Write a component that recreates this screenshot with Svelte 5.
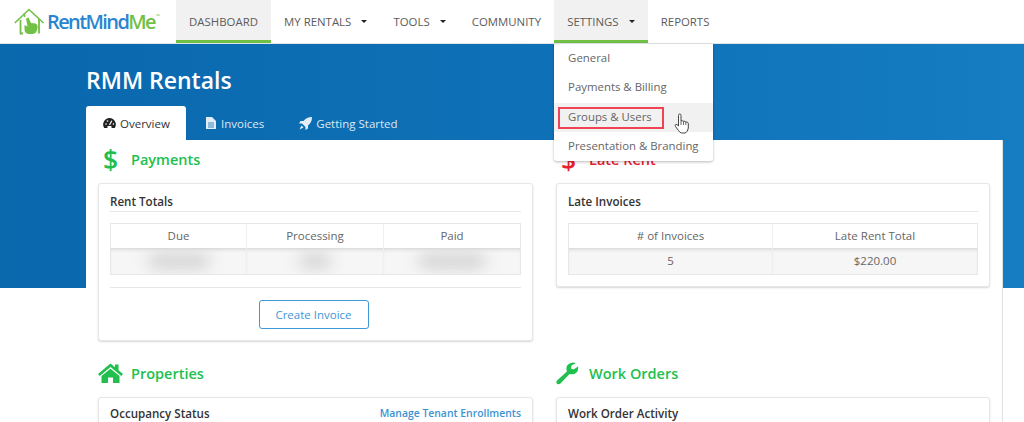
<script>
  const nav = [
    { label: 'Dashboard', active: true },
    { label: 'My Rentals', caret: true },
    { label: 'Tools', caret: true },
    { label: 'Community' },
    { label: 'Settings', caret: true, active: true, menu: true },
    { label: 'Reports' }
  ];
  const menu = ['General', 'Payments & Billing', 'Groups & Users', 'Presentation & Branding'];
</script>

<header class="nav">
  <a class="logo" href="#top">
    <svg width="32" height="27" viewBox="0 0 32 27" fill="none">
      <path d="M0.8 15 L15 1.5 L29.5 15" stroke="#72c045" stroke-width="1.6"/>
      <path d="M6.5 12 V25.5 H9 M25 11 V25.5" stroke="#72c045" stroke-width="1.8"/>
      <path d="M10.5 5 V9" stroke="#72c045" stroke-width="1.5"/>
      <path d="M12 10.5 L14.5 9.5 L17 15 L21.5 15.5 Q24 16.5 23.5 20 Q23 25.5 18.5 26 H14.5 Q10.5 25.5 10.5 21 V17 L13.5 18.5 Z" fill="#72c045"/>
    </svg>
    <span class="wordmark"><b class="blue">RentMind</b><b class="green">Me</b><sup>™</sup></span>
  </a>
  <nav class="items">
    {#each nav as item}
      <div class="item" class:active={item.active}>
        {item.label}
        {#if item.caret}<i class="caret"></i>{/if}
        {#if item.menu}
          <div class="menu">
            {#each menu as m, i}
              <div class="menu-row" class:hover={i === 2}>
                {#if i === 2}<span class="callout">{m}</span>{:else}{m}{/if}
              </div>
            {/each}
            <svg class="hand" width="16" height="21" viewBox="0 0 16 21">
              <path d="M4.5 13 V2.5 Q4.5 1 5.7 1 Q7 1 7 2.5 V8 Q9 7.3 9.5 8.3 Q11.3 7.8 11.8 9 Q13.8 8.7 14.3 10.2 V15 Q14 19 11 20 H7.5 Q5.5 19.5 4.5 17.5 L1.5 13.5 Q0.6 12 1.8 11.4 Q3 11.2 4.5 13 Z" fill="#fff" stroke="#444" stroke-width="1"/>
              <path d="M7 8 V12 M9.5 8.5 V12 M11.8 9 V12" stroke="#444" stroke-width=".8"/>
            </svg>
          </div>
        {/if}
      </div>
    {/each}
  </nav>
</header>

<main class="hero">
  <h1>RMM Rentals</h1>
  <div class="tabs">
    <div class="tab on">
      <svg width="13" height="12" viewBox="0 0 13 12"><path d="M6.5 1 A6.5 6.5 0 0 0 1.2 11 H11.8 A6.5 6.5 0 0 0 6.5 1 Z" fill="#222"/><path d="M6.5 8 L8.8 3.8" stroke="#fff" stroke-width="1.2"/><path d="M4.5 11 V9 H8.5 V11" fill="#fff"/><circle cx="3" cy="7" r=".8" fill="#fff"/><circle cx="4.5" cy="4" r=".8" fill="#fff"/><circle cx="10.4" cy="7" r=".8" fill="#fff"/></svg>
      Overview
    </div>
    <div class="tab">
      <svg width="10" height="12" viewBox="0 0 10 12"><path d="M0 0 H6 L10 4 V12 H0 Z" fill="#e4edf5"/><path d="M2 6 H8 M2 8 H8 M2 10 H8" stroke="#0f70b5" stroke-width=".8"/></svg>
      Invoices
    </div>
    <div class="tab">
      <svg width="13" height="13" viewBox="0 0 13 13"><path d="M13 0 Q7.5 0 4.5 4 H1.5 L0 6.5 H3 L6.5 10 V13 L9 11.5 V8.5 Q13 5.5 13 0 Z" fill="#e4edf5"/><path d="M2.5 8.5 L0.5 12.5 L4.5 10.5 Z" fill="#e4edf5"/></svg>
      Getting Started
    </div>
  </div>

  <div class="panel">
    <section class="block">
      <h2 class="green-h"><span class="ic dollar">$</span>Payments</h2>
      <div class="card">
        <h3>Rent Totals</h3>
        <div class="table three">
          <div class="th">Due</div><div class="th">Processing</div><div class="th">Paid</div>
          <div class="td"><span class="smudge w1"></span></div>
          <div class="td"><span class="smudge w2"></span></div>
          <div class="td"><span class="smudge w3"></span></div>
        </div>
        <div class="actions"><button>Create Invoice</button></div>
      </div>
    </section>

    <section class="block">
      <h2 class="red-h"><span class="ic dollar">$</span>Late Rent</h2>
      <div class="card">
        <h3>Late Invoices</h3>
        <div class="table two">
          <div class="th"># of Invoices</div><div class="th">Late Rent Total</div>
          <div class="td">5</div><div class="td">$220.00</div>
        </div>
      </div>
    </section>

    <section class="block lower">
      <h2 class="green-h">
        <svg class="ic-svg" width="25" height="20" viewBox="0 0 25 20"><path d="M12.5 0.5 L17 4.3 V1.5 H20.5 V7.3 L25 11 L23.3 13 L12.5 4 L1.7 13 L0 11 Z" fill="#21bf4d"/><path d="M12.5 5.8 L21.5 13 V20 H15 V14.5 H10 V20 H3.5 V13 Z" fill="#21bf4d"/></svg>
        Properties
      </h2>
      <div class="card">
        <div class="row-title"><h3 class="bare">Occupancy Status</h3><a href="#top">Manage Tenant Enrollments</a></div>
      </div>
    </section>

    <section class="block lower">
      <h2 class="green-h">
        <svg class="ic-svg wrench" width="23" height="23" viewBox="0 0 23 23"><path d="M22 4.5 L17.5 7.5 L15 6.5 L15.5 3.5 L20 1 Q15 -0.8 11.5 3 Q9.5 6 11 9.5 L1 18.5 Q-0.3 20.5 1 21.8 Q2.8 23 4.5 21.5 L13.5 12 Q17.5 13.2 20.5 10.5 Q22.7 8 22 4.5 Z" fill="#21bf4d"/></svg>
        Work Orders
      </h2>
      <div class="card"><h3 class="bare">Work Order Activity</h3></div>
    </section>
  </div>
</main>

<style>
  :global(body) {
    margin: 0;
    overflow: hidden;
    height: 422px;
    background: #fff;
    font-family: "Open Sans", sans-serif;
    color: #555;
  }
  .nav {
    display: flex;
    height: 43px;
    background: #fff;
    border-bottom: 1px solid #dfe6ea;
  }
  .logo {
    display: flex;
    align-items: flex-start;
    width: 176px;
    padding: 8px 0 0 14px;
    box-sizing: border-box;
    text-decoration: none;
  }
  .wordmark {
    margin-left: 1px;
    font-size: 20px;
    line-height: 27px;
    letter-spacing: -1.6px;
    white-space: nowrap;
  }
  .wordmark b { font-weight: 600; }
  .blue { color: #2a85cf; }
  .green { color: #72c045; }
  .wordmark sup { color: #72c045; font-size: 5px; vertical-align: 11px; line-height: 0; letter-spacing: 0; margin-left: 1px; }
  .items { display: flex; }
  .item {
    position: relative;
    height: 43px;
    box-sizing: border-box;
    padding: 14px 13.1px 0;
    font-size: 11.4px;
    line-height: 15px;
    text-transform: uppercase;
    color: #5c5c5c;
    white-space: nowrap;
  }
  .item.active {
    background: #f1f1f1;
    box-shadow: inset 0 -3px 0 #71bf44;
  }
  .caret {
    display: inline-block;
    width: 0;
    height: 0;
    margin: 0 0 2px 7px;
    vertical-align: middle;
    border-left: 3px solid transparent;
    border-right: 3px solid transparent;
    border-top: 3px solid #222;
  }
  .menu {
    position: absolute;
    z-index: 5;
    top: 44px;
    left: 0;
    width: 159px;
    height: 117px;
    background: #fff;
    box-shadow: 0 1px 3px rgba(0, 0, 0, .28);
    text-transform: none;
    font-size: 11.4px;
    border-radius: 0 0 3px 3px;
  }
  .menu-row {
    height: 29.3px;
    line-height: 28px;
    padding-left: 14px;
    color: #666;
  }
  .menu-row.hover { background: #f1f1f1; }
  .callout {
    display: inline-block;
    margin: 4px 0 0 -10px;
    padding: 0 10px 0 8px;
    height: 18px;
    line-height: 16px;
    border: 2px solid #ef4453;
  }
  .hand { position: absolute; left: 120px; top: 69px; }
  .hero {
    padding: 0 21px 0 86px;
    background: linear-gradient(90deg, #0a68ad, #0f72b8 60%, #167dc2) no-repeat;
    background-size: 100% 244px;
    height: 378px;
    overflow: hidden;
  }
  h1 {
    margin: 0;
    padding-top: 21px;
    height: 41px;
    font-size: 23px;
    line-height: 30px;
    font-weight: 600;
    color: #fff;
  }
  .tabs { display: flex; height: 34px; }
  .tab {
    display: flex;
    align-items: center;
    gap: 5px;
    padding: 0 20px;
    font-size: 11.5px;
    color: #dce9f3;
    white-space: nowrap;
  }
  .tab:nth-child(3) { padding-left: 15px; gap: 4px; }
  .tab.on {
    gap: 4px;
    padding: 0 0 0 17px;
    width: 83px;
    background: #fff;
    color: #333;
    border-radius: 3px 3px 0 0;
  }
  .panel {
    display: grid;
    grid-template-columns: 435px 434px;
    column-gap: 23px;
    align-items: start;
    padding: 0 12px;
    background: #fff;
    border-right: 1px solid #dde2e6;
    min-height: 300px;
  }
  .block { min-width: 0; }
  .lower { margin-top: 10px; }
  h2 {
    display: flex;
    align-items: center;
    margin: 0 0 4px;
    height: 39px;
    font-size: 14.5px;
    font-weight: 600;
  }
  .lower h2 { height: 44px; margin-bottom: 2px; }
  .green-h { color: #21bf4d; }
  .red-h { color: #e8202e; }
  .ic {
    display: inline-block;
    width: 33px;
    padding: 2px 0 0 5px;
    box-sizing: border-box;
    font-size: 26.5px;
    line-height: 1;
    font-weight: 600;
  }
  .ic-svg { margin-right: 8px; flex: none; }
  .lower .wrench { margin-right: 10px; }
  .card {
    padding: 10px 11px 11px;
    background: #fff;
    border: 1px solid #e7e7e7;
    border-radius: 3px;
    box-shadow: 0 1px 2px rgba(0, 0, 0, .16);
  }
  .lower .card { padding-top: 8px; }
  h3 {
    margin: 0 0 11px;
    padding-bottom: 2px;
    height: 15px;
    font-size: 11.6px;
    line-height: 15px;
    font-weight: 600;
    color: #333;
    border-bottom: 1px solid #e6e6e6;
  }
  h3.bare { border: 0; }
  .row-title { display: flex; justify-content: space-between; }
  .row-title a {
    color: #3b93d3;
    font-size: 10.4px;
    line-height: 15px;
    font-weight: 600;
    text-decoration: none;
  }
  .table {
    display: grid;
    border: 1px solid #e7e7e7;
    font-size: 11.5px;
    color: #666;
    text-align: center;
  }
  .three { grid-template-columns: 136px 137px 1fr; }
  .two { grid-template-columns: 204px 1fr; }
  .th {
    height: 24px;
    line-height: 24px;
    border-right: 1px solid #f0f0f0;
  }
  .td {
    height: 26px;
    line-height: 26px;
    background: #f6f6f6;
    border-right: 1px solid #efefef;
    box-shadow: inset 0 4px 4px -3px rgba(0, 0, 0, .16);
    overflow: hidden;
  }
  .td:last-child { border-right: 0; }
  .three .th:nth-child(3), .two .th:nth-child(2) { border-right: 0; }
  .smudge {
    display: inline-block;
    height: 14px;
    margin-top: 6px;
    border-radius: 7px;
    background: #cfcfcf;
    filter: blur(8px);
  }
  .w1 { width: 62px; }
  .w2 { width: 32px; }
  .w3 { width: 68px; }
  .actions {
    margin-top: 12px;
    padding-top: 12px;
    border-top: 1px solid #e6e6e6;
    text-align: center;
    font-size: 0;
  }
  button {
    width: 110px;
    height: 29px;
    margin-right: 4px;
    padding: 0;
    background: #fff;
    border: 1px solid #3f97d6;
    border-radius: 3px;
    color: #3f97d6;
    font: 11.5px "Open Sans", sans-serif;
  }
</style>
